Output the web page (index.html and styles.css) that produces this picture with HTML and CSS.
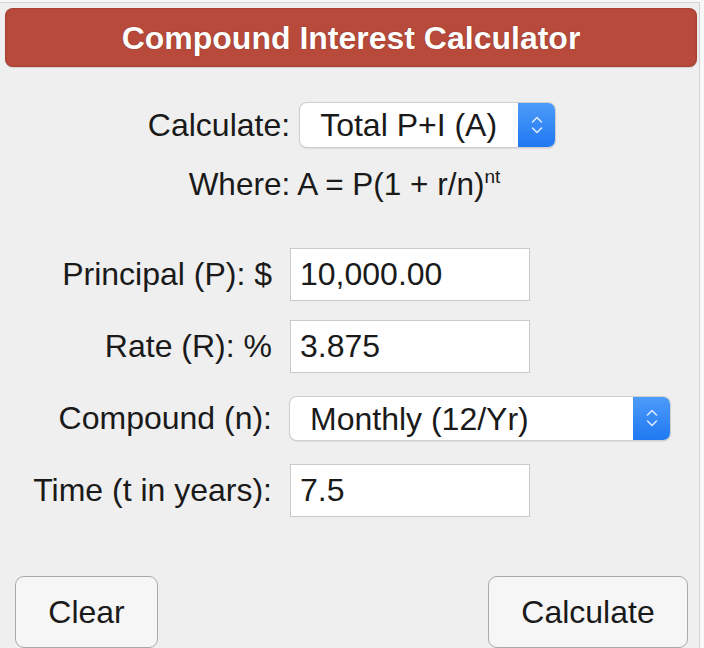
FILE: index.html
```html
<!DOCTYPE html>
<html lang="en">
<head>
<meta charset="utf-8">
<title>Compound Interest Calculator</title>
<link rel="stylesheet" href="styles.css">
</head>
<body>
<div class="panel">
  <div class="header">Compound Interest Calculator</div>

  <div class="calc-row">
    <span class="label">Calculate:</span>
    <div class="select select-calc">
      <span class="select-text">Total P+I (A)</span>
      <span class="stepper">
        <svg width="14" height="22" viewBox="0 0 14 22"><path d="M2.5 8 L7 3.5 L11.5 8 M2.5 14 L7 18.5 L11.5 14" fill="none" stroke="#dbe9ff" stroke-width="1.6" stroke-linecap="round" stroke-linejoin="round"/></svg>
      </span>
    </div>
  </div>

  <div class="formula">Where: A = P(1 + r/n)<sup>nt</sup></div>

  <div class="fields">
    <label class="label">Principal (P): $</label>
    <div class="input">10,000.00</div>

    <label class="label">Rate (R): %</label>
    <div class="input">3.875</div>

    <label class="label">Compound (n):</label>
    <div class="select select-wide">
      <span class="select-text">Monthly (12/Yr)</span>
      <span class="stepper">
        <svg width="14" height="22" viewBox="0 0 14 22"><path d="M2.5 8 L7 3.5 L11.5 8 M2.5 14 L7 18.5 L11.5 14" fill="none" stroke="#dbe9ff" stroke-width="1.6" stroke-linecap="round" stroke-linejoin="round"/></svg>
      </span>
    </div>

    <label class="label">Time (t in years):</label>
    <div class="input">7.5</div>
  </div>

  <div class="buttons">
    <button class="btn btn-clear">Clear</button>
    <button class="btn btn-calc">Calculate</button>
  </div>
</div>
</body>
</html>
```

FILE: styles.css
```css
* { box-sizing: border-box; }

html, body {
  margin: 0;
  padding: 0;
  background: #f8f8f8;
}

body {
  font-family: "Liberation Sans", Arial, sans-serif;
  color: #1a1a1a;
  width: 704px;
  height: 648px;
  overflow: hidden;
}

.panel {
  margin-top: 2px;
  width: 700px;
  height: 646px;
  background: #efefef;
  border-top: 1px solid #d6d6d6;
  border-right: 1px solid #d2d2d2;
  padding-top: 5px;
}

.header {
  margin: 0 2px 0 5px;
  height: 59px;
  border-radius: 8px;
  background: #b74a3a;
  box-shadow: inset 0 0 2px rgba(90, 20, 10, 0.5), 0 1px 1px rgba(0,0,0,0.12);
  color: #ffffff;
  font-weight: bold;
  font-size: 32px;
  line-height: 60px;
  text-align: center;
  text-shadow: 0 0 1px rgba(80, 10, 0, 0.6);
}

.label {
  font-size: 32px;
  white-space: nowrap;
}

.calc-row {
  margin-top: 36px;
  display: flex;
  justify-content: center;
  align-items: center;
  gap: 10px;
  padding-left: 4px;
}

.select {
  display: flex;
  align-items: stretch;
  height: 44px;
  background: #ffffff;
  border-radius: 7px;
  box-shadow: 0 0 0 1px #cfcfcf, 0 1px 2px rgba(0,0,0,0.25);
  overflow: hidden;
}

.select-calc { width: 255px; }
.select-wide { width: 380px; height: 43px; }

.select-text {
  flex: 1;
  font-size: 32px;
  line-height: 44px;
  padding-left: 20px;
  white-space: nowrap;
}

.stepper {
  width: 37px;
  display: flex;
  align-items: center;
  justify-content: center;
  background: linear-gradient(#4d9bf9, #2079f2);
}

.formula {
  margin-top: 19px;
  text-align: center;
  font-size: 31.5px;
  line-height: 36px;
  padding-right: 10px;
}

.formula sup {
  font-size: 19px;
  line-height: 0;
  vertical-align: 12px;
}

.fields {
  margin-top: 36px;
  display: grid;
  grid-template-columns: 272px auto;
  grid-auto-rows: 72px;
  column-gap: 18px;
  align-items: center;
  justify-items: start;
}

.fields .label {
  justify-self: end;
}

.input {
  width: 240px;
  height: 53px;
  background: #ffffff;
  border: 1px solid #cacaca;
  font-size: 32px;
  line-height: 51px;
  padding-left: 9px;
}

.buttons {
  margin-top: 50px;
  display: flex;
  justify-content: space-between;
  padding: 0 11px 0 15px;
}

.btn {
  height: 72px;
  border: 1px solid #a9a9a9;
  border-radius: 9px;
  background: #f6f6f6;
  font-family: "Liberation Sans", Arial, sans-serif;
  font-size: 32px;
  color: #1a1a1a;
  padding: 0;
}

.btn-clear { width: 143px; }
.btn-calc { width: 200px; }
```
